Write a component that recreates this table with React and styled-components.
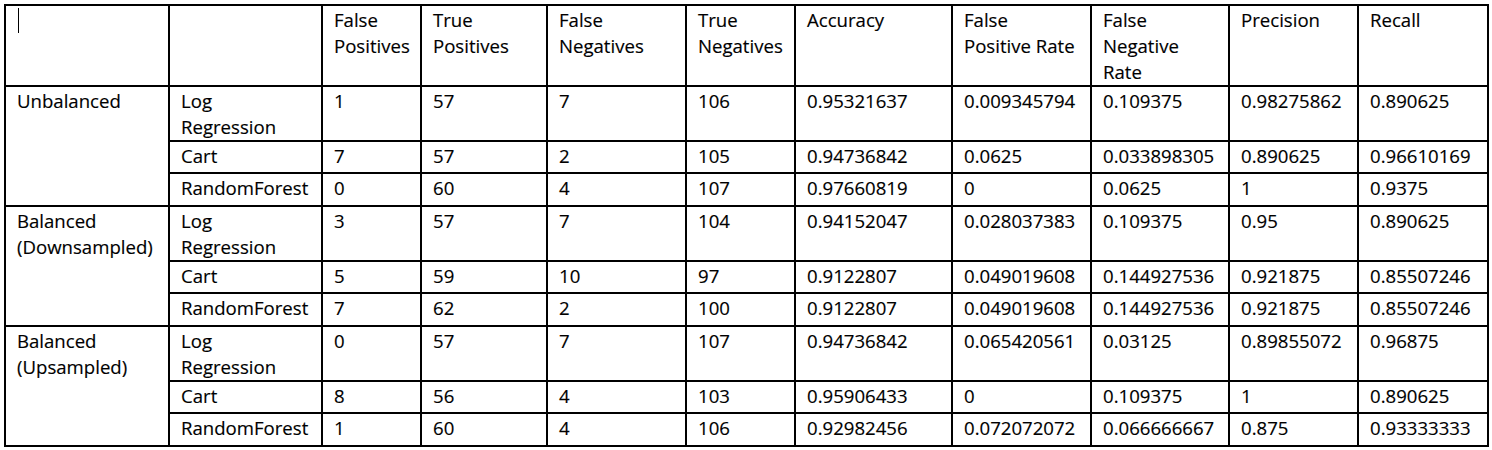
import React from "react";
import styled, { createGlobalStyle } from "styled-components";

const GlobalStyle = createGlobalStyle`
  body {
    margin: 0;
    background: #fff;
    font-family: "Open Sans", "Liberation Sans", sans-serif;
    color: #000;
  }
`;

const widths = [164, 153, 99, 126, 139, 109, 157, 139, 138, 129, 130];

const headers = [
  "",
  "",
  "False\nPositives",
  "True\nPositives",
  "False\nNegatives",
  "True\nNegatives",
  "Accuracy",
  "False\nPositive Rate",
  "False\nNegative\nRate",
  "Precision",
  "Recall",
];

const groups = [
  {
    name: "Unbalanced",
    rows: [
      ["Log\nRegression", "1", "57", "7", "106", "0.95321637", "0.009345794", "0.109375", "0.98275862", "0.890625"],
      ["Cart", "7", "57", "2", "105", "0.94736842", "0.0625", "0.033898305", "0.890625", "0.96610169"],
      ["RandomForest", "0", "60", "4", "107", "0.97660819", "0", "0.0625", "1", "0.9375"],
    ],
  },
  {
    name: "Balanced\n(Downsampled)",
    rows: [
      ["Log\nRegression", "3", "57", "7", "104", "0.94152047", "0.028037383", "0.109375", "0.95", "0.890625"],
      ["Cart", "5", "59", "10", "97", "0.9122807", "0.049019608", "0.144927536", "0.921875", "0.85507246"],
      ["RandomForest", "7", "62", "2", "100", "0.9122807", "0.049019608", "0.144927536", "0.921875", "0.85507246"],
    ],
  },
  {
    name: "Balanced\n(Upsampled)",
    rows: [
      ["Log\nRegression", "0", "57", "7", "107", "0.94736842", "0.065420561", "0.03125", "0.89855072", "0.96875"],
      ["Cart", "8", "56", "4", "103", "0.95906433", "0", "0.109375", "1", "0.890625"],
      ["RandomForest", "1", "60", "4", "106", "0.92982456", "0.072072072", "0.066666667", "0.875", "0.93333333"],
    ],
  },
];

const rowHeights = [54, 32, 33];

export default function App() {
  return (
    <Page>
      <GlobalStyle />
      <Frame>
        <Table>
          <colgroup>
            {widths.map((w, i) => (
              <col key={i} style={{ width: w }} />
            ))}
          </colgroup>
          <thead>
            <HeadRow>
              {headers.map((h, i) => (
                <Cell key={i}>{i === 0 ? <Caret /> : h}</Cell>
              ))}
            </HeadRow>
          </thead>
          <tbody>
            {groups.map((g) =>
              g.rows.map((r, ri) => (
                <BodyRow key={g.name + ri} h={rowHeights[ri]}>
                  {ri === 0 && <Cell rowSpan={3}>{g.name}</Cell>}
                  {r.map((v, ci) => (
                    <Cell key={ci}>{v}</Cell>
                  ))}
                </BodyRow>
              ))
            )}
          </tbody>
        </Table>
        <Handle />
      </Frame>
    </Page>
  );
}

const Page = styled.div`
  padding: 4px 0 0 4px;
`;

const Frame = styled.div`
  position: relative;
  width: 1486px;
`;

const Table = styled.table`
  border-collapse: collapse;
  table-layout: fixed;
  width: 1485px;
  font-size: 18.6px;
  line-height: 26px;
  -webkit-text-stroke: 0.15px #000;
`;

const HeadRow = styled.tr`
  height: 81px;
`;

const BodyRow = styled.tr`
  height: ${(p) => p.h}px;
`;

const Cell = styled.td`
  border: 2px solid #000;
  padding: 1px 4px 0 11px;
  vertical-align: top;
  text-align: left;
  white-space: pre-line;
  font-weight: 400;
`;

const Caret = styled.span`
  display: inline-block;
  width: 1px;
  height: 25px;
  background: #000;
  margin-left: 1px;
  vertical-align: top;
  margin-top: 1px;
`;

const Handle = styled.div`
  position: absolute;
  right: -4px;
  bottom: -7px;
  width: 6px;
  height: 6px;
  border-right: 1px solid #bdbdbd;
  border-bottom: 1px solid #bdbdbd;
`;
